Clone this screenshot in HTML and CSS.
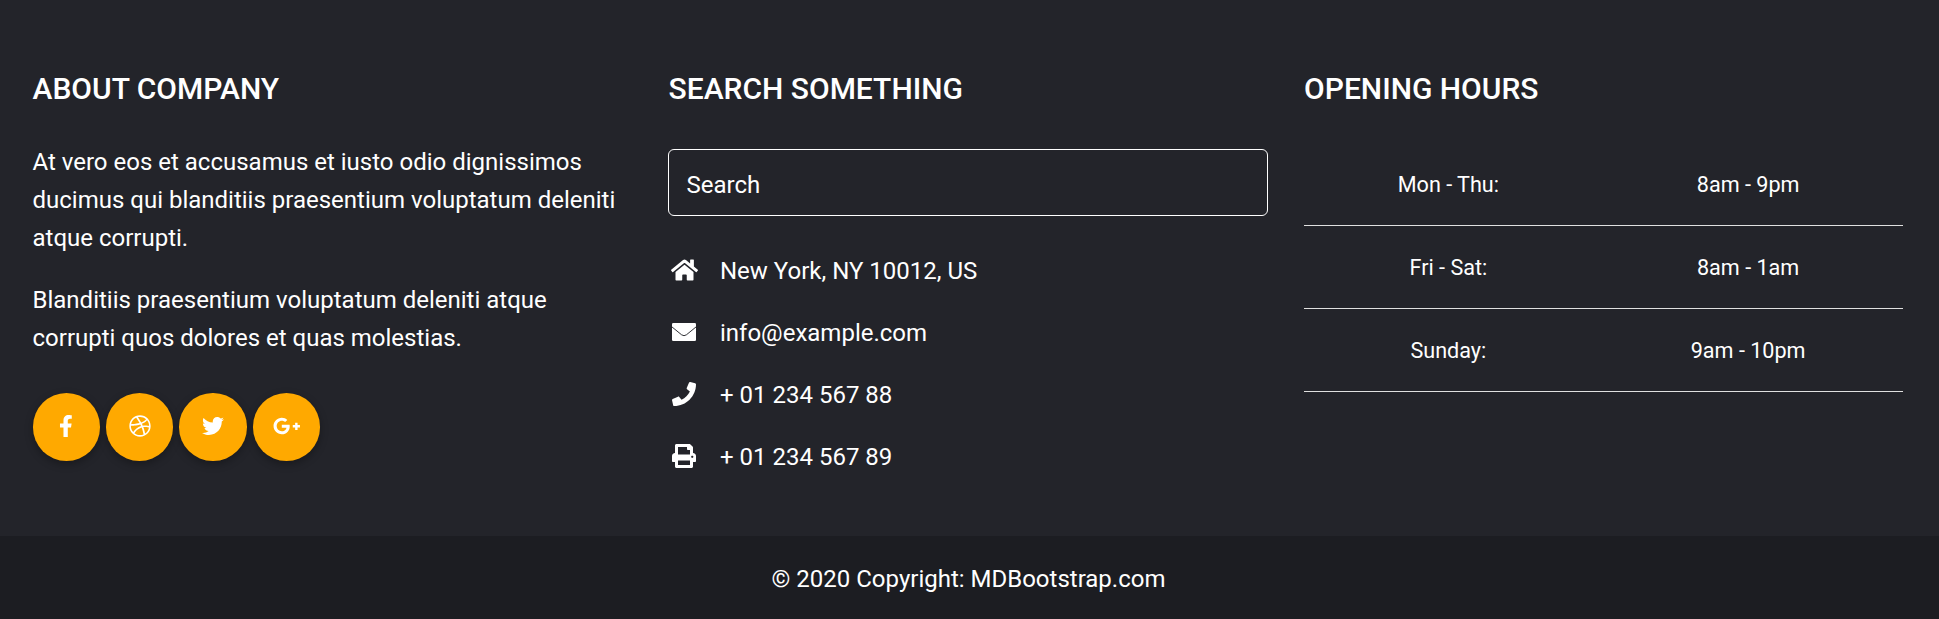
FILE: index.html
```html
<!DOCTYPE html>
<html lang="en">
<head>
<meta charset="utf-8">
<title>Footer</title>
<link rel="stylesheet" href="styles.css">
</head>
<body>
<footer class="footer">
  <div class="grid">
    <section class="about">
      <h5 class="title">About company</h5>
      <p>At vero eos et accusamus et iusto odio dignissimos ducimus qui blanditiis praesentium voluptatum deleniti atque corrupti.</p>
      <p>Blanditiis praesentium voluptatum deleniti atque corrupti quos dolores et quas molestias.</p>
      <div class="social">
        <a class="btn"><svg height="22" viewBox="0 0 320 512"><path d="M279.14 288l14.22-92.66h-88.91v-60.13c0-25.35 12.42-50.06 52.24-50.06h40.42V6.26S260.43 0 225.36 0c-73.22 0-121.08 44.38-121.08 124.72v70.62H22.89V288h81.39v224h100.17V288z"/></svg></a>
        <a class="btn"><svg height="22" viewBox="0 0 512 512"><path d="M256 8C119.252 8 8 119.252 8 256s111.252 248 248 248 248-111.252 248-248S392.748 8 256 8zm163.97 114.366c29.503 36.046 47.369 81.957 47.835 131.955-6.984-1.477-77.018-15.682-147.502-6.818-5.752-14.041-11.181-26.393-18.617-41.614 78.321-31.977 113.818-77.482 118.284-83.523zM396.421 97.87c-3.81 5.427-35.697 48.286-111.021 76.519-34.712-63.776-73.185-116.168-79.04-124.008 67.176-16.193 137.966 1.27 190.061 47.489zm-230.48-33.25c5.585 7.659 43.438 60.116 78.537 122.509-99.087 26.313-186.36 25.934-195.834 25.809C62.38 147.205 106.678 92.573 165.941 64.62zM44.17 256.323c0-2.166.043-4.322.108-6.473 9.268.19 111.92 1.513 217.706-30.146 6.064 11.868 11.857 23.915 17.174 35.949-76.599 21.575-146.194 83.527-180.531 142.306C64.794 360.405 44.17 310.73 44.17 256.323zm81.807 167.113c22.127-45.233 82.178-103.622 167.579-132.756 29.74 77.283 42.039 142.053 45.189 160.638-68.112 29.013-150.015 21.053-212.768-27.882zm248.38 8.489c-2.171-12.886-13.446-74.897-41.152-151.033 66.38-10.626 124.7 6.768 131.947 9.055-9.442 58.941-43.273 109.844-90.795 141.978z"/></svg></a>
        <a class="btn"><svg height="22" viewBox="0 0 512 512"><path d="M459.37 151.716c.325 4.548.325 9.097.325 13.645 0 138.72-105.583 298.558-298.558 298.558-59.452 0-114.68-17.219-161.137-47.106 8.447.974 16.568 1.299 25.34 1.299 49.055 0 94.213-16.568 130.274-44.832-46.132-.975-84.792-31.188-98.112-72.772 6.498.974 12.995 1.624 19.818 1.624 9.421 0 18.843-1.3 27.614-3.573-48.081-9.747-84.143-51.98-84.143-102.985v-1.299c13.969 7.797 30.214 12.67 47.431 13.319-28.264-18.843-46.781-51.005-46.781-87.391 0-19.492 5.197-37.36 14.294-52.954 51.655 63.675 129.3 105.258 216.365 109.807-1.624-7.797-2.599-15.918-2.599-24.04 0-57.828 46.782-104.934 104.934-104.934 30.213 0 57.502 12.67 76.67 33.137 23.715-4.548 46.456-13.32 66.599-25.34-7.798 24.366-24.366 44.833-46.132 57.827 21.117-2.273 41.584-8.122 60.426-16.243-14.292 20.791-32.161 39.308-52.628 54.253z"/></svg></a>
        <a class="btn"><svg height="22" viewBox="0 0 640 512"><path d="M386.061 228.496c1.834 9.692 3.143 19.384 3.143 31.956C389.204 370.205 315.599 448 204.8 448c-106.084 0-192-85.915-192-192s85.916-192 192-192c51.864 0 95.083 18.859 128.611 50.292l-52.126 50.03c-14.145-13.621-39.028-29.599-76.485-29.599-65.484 0-118.92 54.221-118.92 121.277 0 67.056 53.436 121.277 118.92 121.277 75.961 0 104.513-54.745 108.965-82.773H204.8v-66.009h181.261zm185.406 6.437V179.2h-56.001v55.733h-55.733v56.001h55.733v55.733h56.001v-55.733H627.2v-56.001h-55.733z"/></svg></a>
      </div>
    </section>
    <section>
      <h5 class="title">Search something</h5>
      <div class="field">Search</div>
      <ul class="contact">
        <li><svg height="24" viewBox="0 0 576 512"><path d="M280.37 148.26L96 300.11V464a16 16 0 0 0 16 16l112.06-.29a16 16 0 0 0 15.92-16V368a16 16 0 0 1 16-16h64a16 16 0 0 1 16 16v95.64a16 16 0 0 0 16 16.05L464 480a16 16 0 0 0 16-16V300L295.67 148.26a12.19 12.19 0 0 0-15.3 0zM571.6 251.47L488 182.56V44.05a12 12 0 0 0-12-12h-56a12 12 0 0 0-12 12v72.61L318.47 43a48 48 0 0 0-61 0L4.34 251.47a12 12 0 0 0-1.6 16.9l25.5 31A12 12 0 0 0 45.15 301l235.22-193.74a12.19 12.19 0 0 1 15.3 0L530.9 301a12 12 0 0 0 16.9-1.6l25.5-31a12 12 0 0 0-1.7-16.93z"/></svg><span>New York, NY 10012, US</span></li>
        <li><svg height="24" viewBox="0 0 512 512"><rect y="64" width="512" height="384" rx="28"/><path class="flap" d="M-10 140L205 316Q256 354 307 316L522 140"/></svg><span>info@example.com</span></li>
        <li><svg height="24" viewBox="0 0 512 512"><path d="M493.400 24.600l-104-24c-11.300-2.600-22.900 3.300-27.500 13.900l-48 112c-4.200 9.800-1.400 21.300 6.900 28l60.600 49.600c-36 76.700-98.900 140.500-177.200 177.200l-49.600-60.600c-6.800-8.300-18.200-11.100-28-6.900l-112 48C3.900 366.500-2 378.100.6 389.400l24 104C27.100 504.200 36.700 512 48 512c256.100 0 464-207.500 464-464 0-11.200-7.700-20.900-18.600-23.400z"/></svg><span>+ 01 234 567 88</span></li>
        <li><svg height="24" viewBox="0 0 512 512"><path d="M448 192V77.250c0-8.490-3.370-16.620-9.370-22.630L393.370 9.370c-6-6-14.140-9.370-22.630-9.370H96C78.330 0 64 14.330 64 32v160c-35.350 0-64 28.650-64 64v112c0 8.840 7.160 16 16 16h48v96c0 17.670 14.330 32 32 32h320c17.670 0 32-14.330 32-32v-96h48c8.840 0 16-7.160 16-16V256c0-35.350-28.650-64-64-64zm-64 256H128v-96h256v96zm0-224H128V64h192v48c0 8.840 7.160 16 16 16h48v96zm48 72c-13.250 0-24-10.750-24-24 0-13.260 10.750-24 24-24s24 10.740 24 24c0 13.250-10.750 24-24 24z"/></svg><span>+ 01 234 567 89</span></li>
      </ul>
    </section>
    <section>
      <h5 class="title">Opening hours</h5>
      <table class="hours">
        <tr><td>Mon - Thu:</td><td>8am - 9pm</td></tr>
        <tr><td>Fri - Sat:</td><td>8am - 1am</td></tr>
        <tr><td>Sunday:</td><td>9am - 10pm</td></tr>
      </table>
    </section>
  </div>
  <div class="copyright">© 2020 Copyright: MDBootstrap.com</div>
</footer>
</body>
</html>
```
FILE: styles.css
```css
* { box-sizing: border-box; }
body { margin: 0; background: #23242a; font: 400 24px/38px Roboto, sans-serif; color: #fff; }
.footer { height: 619px; overflow: hidden; display: flex; flex-direction: column; }
.grid { height: 536px; padding: 71px 36px 0 32.500px; display: grid; grid-template-columns: repeat(3, 1fr); gap: 36px; }
.title { margin: 0 0 36px; font-size: 30px; line-height: 36px; font-weight: 500; text-transform: uppercase; }
section + section .title { padding-left: 0.600px; }
p { margin: 0 0 24px; }
.social { display: flex; gap: 6px; margin-top: 36px; }
.btn { width: 67.400px; height: 67.500px; padding-bottom: 2px; border-radius: 50%; background: #ffa900; display: flex; align-items: center; justify-content: center; box-shadow: 0 3px 8px rgba(0,0,0,.3); }
svg { fill: #fff; display: block; }
.flap { fill: none; stroke: #23242a; stroke-width: 20; }
.field { height: 67px; margin-top: 42px; border: 1px solid #fff; border-radius: 6px; padding: 16px 17.500px; }
.contact { list-style: none; margin: 36px 0 0; padding: 0 0 0 1px; display: grid; gap: 24px; }
.contact li { display: grid; grid-template-columns: 30px 1fr; column-gap: 21px; align-items: center; }
.contact svg { justify-self: center; margin-bottom: 2px; }
.hours { width: 100%; margin-top: -1px; table-layout: fixed; border-collapse: collapse; font-size: 21.600px; text-align: center; }
.hours td { height: 83px; padding: 3px 10px 0 0; border-bottom: 1px solid #e0e0e0; }
.copyright { height: 83px; padding: 24px 2px 0 0; text-align: center; background: #1c1d22; }
```
